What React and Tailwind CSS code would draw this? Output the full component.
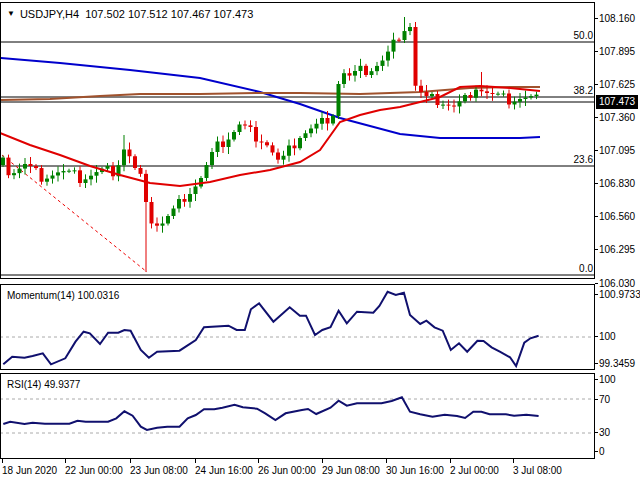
import React from "react";

const FONT = { fontFamily: "'Liberation Sans', Arial, sans-serif" };

const interp = (pts, x) => {
  if (x <= pts[0][0]) return pts[0][1];
  for (let i = 1; i < pts.length; i++) {
    if (x <= pts[i][0]) {
      const [x0, y0] = pts[i - 1];
      const [x1, y1] = pts[i];
      return y0 + ((y1 - y0) * (x - x0)) / (x1 - x0);
    }
  }
  return pts[pts.length - 1][1];
};

const closePts = [
  [0, 160], [10, 172], [25, 165], [40, 176], [60, 172], [80, 178], [100, 172], [115, 170],
  [125, 145], [135, 170], [142, 180], [147, 215], [160, 225], [175, 210], [185, 195],
  [200, 180], [215, 150], [230, 135], [240, 125], [255, 135], [265, 140], [280, 165],
  [300, 135], [320, 125], [335, 110], [340, 70], [350, 78], [360, 72], [372, 68], [385, 60],
  [395, 42], [402, 28], [410, 25], [415, 85], [425, 100], [440, 100], [455, 108],
  [465, 100], [475, 85], [490, 95], [505, 100], [520, 98], [540, 100],
];

const wickOverride = { 22: [135, null], 26: [null, 272], 73: [17, null], 87: [72, null] };

const candles = (() => {
  const out = [];
  let prev = 165;
  for (let i = 0; i < 98; i++) {
    const x = 3 + i * 5.5;
    const c = interp(closePts, x) + ((i * 37) % 13) - 6;
    const o = prev;
    let hi = Math.min(o, c) - 2 - ((i * 13) % 6);
    let lo = Math.max(o, c) + 2 + ((i * 7) % 6);
    if (wickOverride[i]) {
      if (wickOverride[i][0] !== null) hi = wickOverride[i][0];
      if (wickOverride[i][1] !== null) lo = wickOverride[i][1];
    }
    out.push({ x, o, c, hi, lo });
    prev = c;
  }
  return out;
})();

const poly = (pts) => pts.map((p) => p.join(",")).join(" ");

const blueMA = [[0, 58], [60, 63], [130, 70], [200, 78], [260, 92], [300, 104], [340, 118], [400, 134], [440, 138], [520, 138], [540, 137]];
const brownMA = [[0, 100], [50, 99], [100, 96], [140, 94], [200, 94], [260, 93], [300, 93], [360, 94], [420, 92], [470, 88], [510, 87], [540, 87]];
const redMA = [[0, 133], [30, 145], [60, 155], [90, 166], [120, 175], [150, 183], [180, 186], [210, 182], [240, 175], [270, 170], [300, 162], [320, 150], [340, 122], [360, 115], [380, 110], [400, 107], [420, 102], [440, 97], [460, 87], [480, 86], [510, 88], [540, 91]];

const sx = 0.408;
const momRaw = [[8,283],[30,260],[60,263],[80,258],[105,250],[125,283],[160,265],[185,215],[205,185],[220,190],[245,222],[265,188],[290,188],[305,180],[320,182],[345,240],[365,263],[385,245],[440,242],[480,210],[500,172],[560,167],[580,180],[600,180],[615,118],[635,100],[670,155],[710,112],[735,137],[750,137],[772,195],[790,180],[810,172],[830,122],[850,160],[875,125],[915,128],[930,108],[950,65],[970,75],[990,68],[1005,135],[1030,162],[1045,152],[1065,172],[1085,182],[1105,240],[1125,220],[1145,245],[1170,212],[1185,213],[1205,232],[1225,245],[1250,262],[1265,288],[1285,218],[1300,205],[1320,197]];
const rsiRaw = [[8,462],[25,455],[60,462],[80,458],[110,461],[170,461],[190,452],[210,455],[265,455],[285,445],[305,424],[325,437],[345,470],[360,480],[385,473],[410,470],[440,470],[460,445],[480,435],[500,418],[525,418],[545,413],[575,404],[595,412],[630,416],[650,430],[675,450],[700,430],[740,420],[755,417],[775,432],[810,413],[830,392],[850,407],[875,400],[935,400],[960,393],[985,382],[1005,425],[1030,433],[1060,440],[1090,434],[1120,438],[1140,444],[1160,425],[1180,425],[1200,433],[1240,433],[1260,437],[1290,434],[1320,438]];
const conv = (arr) => arr.map(([x, y]) => [+(x * sx).toFixed(1), +(y / 3 + 270).toFixed(1)]);

const AxisLabel = ({ top, children }) => (
  <span className="absolute left-[4px] text-[10px] leading-[12px] text-black" style={{ top }}>
    {children}
  </span>
);

const Tick = ({ top }) => <span className="absolute left-0 w-[3px] h-px bg-black" style={{ top }} />;

const MainPanel = () => (
  <div className="flex h-[277px]">
    <div className="relative w-[595px] border border-black">
      <svg className="absolute inset-0" width="593" height="275" viewBox="1 3 593 275">
        <line x1="0" y1="42" x2="595" y2="42" stroke="#000" />
        <line x1="0" y1="97" x2="595" y2="97" stroke="#000" />
        <line x1="0" y1="102" x2="595" y2="102" stroke="#000" />
        <line x1="0" y1="166" x2="595" y2="166" stroke="#000" />
        <line x1="0" y1="275" x2="595" y2="275" stroke="#000" />
        <line x1="2" y1="155" x2="147" y2="272" stroke="#e00" strokeDasharray="3 3" />
        <polyline points={poly(blueMA)} fill="none" stroke="#0000cc" strokeWidth="2" />
        <polyline points={poly(brownMA)} fill="none" stroke="#a0522d" strokeWidth="2" />
        {candles.map((k, i) => {
          const up = k.c < k.o;
          const col = up ? "#008000" : "#e00000";
          const top = Math.min(k.o, k.c);
          const h = Math.max(1, Math.abs(k.o - k.c));
          return (
            <g key={i}>
              <line x1={k.x} y1={k.hi} x2={k.x} y2={k.lo} stroke={col} />
              <rect x={k.x - 2} y={top} width="4" height={h} fill={col} />
            </g>
          );
        })}
        <polyline points={poly(redMA)} fill="none" stroke="#e00000" strokeWidth="2" />
        <text x="593" y="39" textAnchor="end" fontSize="10" style={FONT}>50.0</text>
        <text x="593" y="94" textAnchor="end" fontSize="10" style={FONT}>38.2</text>
        <text x="593" y="163" textAnchor="end" fontSize="10" style={FONT}>23.6</text>
        <text x="593" y="272" textAnchor="end" fontSize="10" style={FONT}>0.0</text>
      </svg>
      <div className="absolute left-[6px] top-[3px] flex items-center gap-[5px] text-[11px] text-black">
        <span className="text-[8px]">▼</span>
        <span>USDJPY,H4&nbsp; 107.502 107.512 107.467 107.473</span>
      </div>
    </div>
    <div className="relative flex-1">
      {[["108.160", 11], ["107.895", 44], ["107.625", 77], ["107.360", 110], ["107.095", 143], ["106.830", 176], ["106.560", 209], ["106.295", 242], ["106.030", 276]].map(([t, y]) => (
        <React.Fragment key={t}>
          <Tick top={y + 5} />
          <AxisLabel top={y}>{t}</AxisLabel>
        </React.Fragment>
      ))}
      <span className="absolute left-[1px] top-[93px] bg-black px-[3px] text-[10px] leading-[14px] text-white">107.473</span>
    </div>
  </div>
);

const SubPanel = ({ h, top, label, pts, dashes, labels, className }) => (
  <div className={`flex ${className}`} style={{ height: h }}>
    <div className="relative w-[595px] border border-black">
      <svg className="absolute inset-0" width="593" height={h - 2} viewBox={`1 ${top + 1} 593 ${h - 2}`}>
        {dashes.map((y) => (
          <line key={y} x1="0" y1={y} x2="595" y2={y} stroke="#aaa" strokeDasharray="3 3" />
        ))}
        <polyline points={poly(pts)} fill="none" stroke="#10106e" strokeWidth="2" />
      </svg>
      <span className="absolute left-[6px] top-[3px] text-[10px] text-black">{label}</span>
    </div>
    <div className="relative flex-1">
      {labels.map(([t, y]) => (
        <React.Fragment key={t}>
          <Tick top={y - top + 5} />
          <AxisLabel top={y - top}>{t}</AxisLabel>
        </React.Fragment>
      ))}
    </div>
  </div>
);

const dates = [["18 Jun 2020", 2], ["22 Jun 00:00", 65], ["23 Jun 08:00", 130], ["24 Jun 16:00", 195], ["26 Jun 00:00", 258], ["29 Jun 08:00", 322], ["30 Jun 16:00", 386], ["2 Jul 00:00", 450], ["3 Jul 08:00", 513]];

const App = () => (
  <div className="w-[640px] h-[480px] bg-white overflow-hidden pt-[2px]" style={FONT}>
    <MainPanel />
    <SubPanel
      className="mt-[5px]"
      h={86}
      top={284}
      label="Momentum(14) 100.0316"
      pts={conv(momRaw)}
      dashes={[337]}
      labels={[["100.9733", 289], ["100", 331], ["99.3459", 358]]}
    />
    <SubPanel
      className="mt-[3px]"
      h={86}
      top={373}
      label="RSI(14) 49.9377"
      pts={conv(rsiRaw)}
      dashes={[399, 433]}
      labels={[["100", 374], ["70", 394], ["30", 427], ["0", 446]]}
    />
    <div className="relative h-[21px] w-[595px]">
      {dates.map(([t, x]) => (
        <React.Fragment key={t}>
          <span className="absolute top-0 w-px h-[4px] bg-black" style={{ left: x }} />
          <span className="absolute top-[4px] text-[10px] text-black whitespace-nowrap" style={{ left: x }}>{t}</span>
        </React.Fragment>
      ))}
    </div>
  </div>
);

export default App;
